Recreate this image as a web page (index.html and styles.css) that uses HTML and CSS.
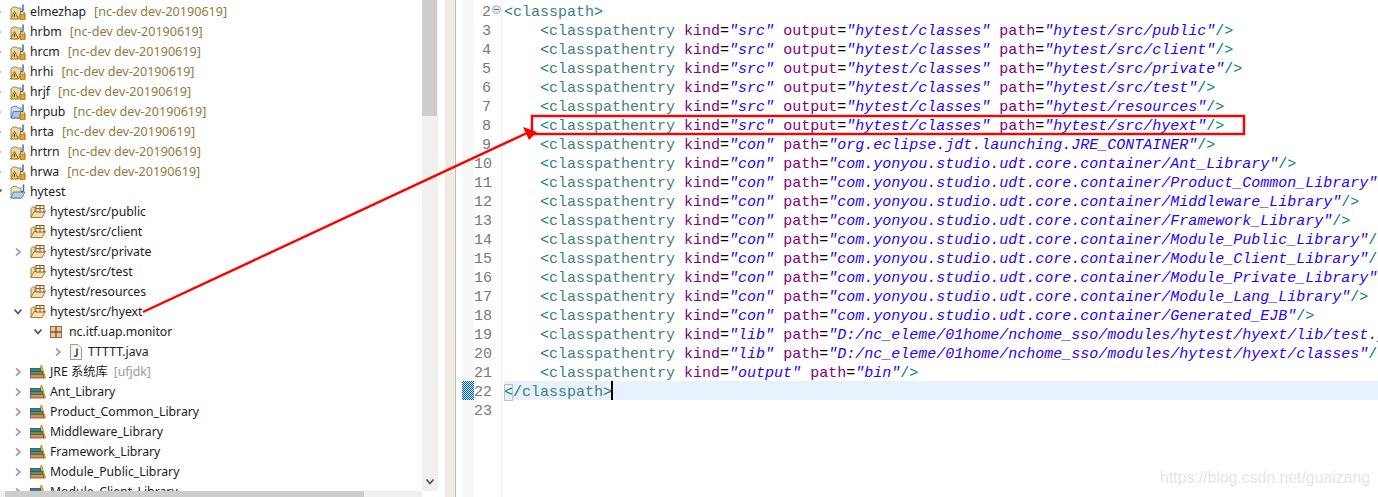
FILE: index.html
```html
<!DOCTYPE html>
<html lang="en">
<head>
<meta charset="utf-8">
<title>Package Explorer and .classpath</title>
<link rel="stylesheet" href="styles.css">
</head>
<body>
<svg class="defs" width="0" height="0" aria-hidden="true">
  <defs>
    <symbol id="ch-r" viewBox="0 0 8 10"><path d="M2 1.5 L6 5 L2 8.5" fill="none" stroke="#a3a3a3" stroke-width="1.8"/></symbol>
    <symbol id="ch-d" viewBox="0 0 10 8"><path d="M1.5 1.5 L5 5.5 L8.5 1.5" fill="none" stroke="#555" stroke-width="1.8"/></symbol>
    <symbol id="closed" viewBox="0 0 16 16">
      <path d="M1 5 L3 3 H6 L7 4 H11 V13 H1 Z" fill="#e9d9a8" stroke="#9a8a60"/>
      <path d="M13 .5 V6 Q13 8 10.5 7.5" fill="none" stroke="#3c6fb0" stroke-width="1.5"/>
      <path d="M4.5 7.5 L8.5 15 H.5 Z" fill="#f7d44a" stroke="#8a6a10"/>
      <path d="M5 10 H4 V13 H5 Z" fill="#333"/>
      <rect x="10" y="9" width="5" height="7" rx="1" fill="#f0a51e" stroke="#a86a10"/>
      <rect x="10.5" y="8" width="4" height="2" fill="#e8e0c8" stroke="#8a7a50" stroke-width=".6"/>
    </symbol>
    <symbol id="closedb" viewBox="0 0 16 16">
      <path d="M1 4 L3 2.5 H7 L8 4 H11 V14 H1 Z" fill="#cfe0f0" stroke="#6e88a6"/>
      <path d="M1 14 L3.5 7.5 H13 L10.5 14 Z" fill="#a9c8ea" stroke="#4f7fb0"/>
      <path d="M13 .5 V6 Q13 8 10.5 7.5" fill="none" stroke="#3c6fb0" stroke-width="1.5"/>
      <rect x="10" y="9" width="5" height="7" rx="1" fill="#f0a51e" stroke="#a86a10"/>
      <rect x="10.5" y="8" width="4" height="2" fill="#e8e0c8" stroke="#8a7a50" stroke-width=".6"/>
    </symbol>
    <symbol id="open" viewBox="0 0 16 16">
      <path d="M1 4 L3 2.5 H7 L8 4 H11 V14 H1 Z" fill="#f4e8c4" stroke="#a4905a"/>
      <path d="M1 14 L3.5 8 H15 L11.5 14 Z" fill="#b4d2f0" stroke="#4f7fb0"/>
      <path d="M13.5 .5 V6 Q13.5 8 11 7.5" fill="none" stroke="#3c6fb0" stroke-width="1.5"/>
    </symbol>
    <symbol id="src" viewBox="0 0 16 16">
      <path d="M1 4.5 L2.5 3 H5 V13.5 H1 Z" fill="#f3dba6" stroke="#a87a38"/>
      <path d="M1 13.5 L4 7.5 H15.5 L12 13.5 Z" fill="#f8dfa8" stroke="#a87a38"/>
      <rect x="6" y="1.5" width="8" height="6.5" fill="#fff2d6" stroke="#8a5a28"/>
      <path d="M6 4.5 H14 M10 1.5 V8" stroke="#8a5a28"/>
    </symbol>
    <symbol id="pkg" viewBox="0 0 12 12">
      <rect x=".5" y=".5" width="11" height="11" fill="#e6c8a4" stroke="#9a6a44"/>
      <path d="M0 6 H12 M6 0 V12" stroke="#8a5234" stroke-width="1.4"/>
    </symbol>
    <symbol id="jfile" viewBox="0 0 12 16">
      <path d="M.5 .5 H8 L11.5 4 V15.5 H.5 Z" fill="#fbf8ee" stroke="#a89a78"/>
      <path d="M7 4.5 V10.5 Q7 12.5 4 12" fill="none" stroke="#2c5fa8" stroke-width="1.8"/>
    </symbol>
    <symbol id="lib" viewBox="0 0 16 16">
      <path d="M11.5 1 L15.5 14 H13 L10 4 Z" fill="#f2c438" stroke="#a87a18" stroke-width=".8"/>
      <rect x=".5" y="4.5" width="10" height="3" fill="#3a7ca4" stroke="#24506e" stroke-width=".8"/>
      <rect x=".5" y="7.5" width="12" height="3" fill="#4a9a5c" stroke="#2a6038" stroke-width=".8"/>
      <rect x=".5" y="10.5" width="13" height="3.5" fill="#dc8a5a" stroke="#8a4a28" stroke-width=".8"/>
    </symbol>
  </defs>
</svg>

<div class="window">
  <aside class="explorer">
    <div class="tree">
      <div class="tree-inner">
        <div class="row"><span class="tw"><svg class="cr"><use href="#ch-r"/></svg></span><svg class="ico"><use href="#closed"/></svg><span class="name">elmezhap</span><span class="deco">[nc-dev dev-20190619]</span></div>
        <div class="row"><span class="tw"><svg class="cr"><use href="#ch-r"/></svg></span><svg class="ico"><use href="#closed"/></svg><span class="name">hrbm</span><span class="deco">[nc-dev dev-20190619]</span></div>
        <div class="row"><span class="tw"><svg class="cr"><use href="#ch-r"/></svg></span><svg class="ico"><use href="#closed"/></svg><span class="name">hrcm</span><span class="deco">[nc-dev dev-20190619]</span></div>
        <div class="row"><span class="tw"><svg class="cr"><use href="#ch-r"/></svg></span><svg class="ico"><use href="#closed"/></svg><span class="name">hrhi</span><span class="deco">[nc-dev dev-20190619]</span></div>
        <div class="row"><span class="tw"><svg class="cr"><use href="#ch-r"/></svg></span><svg class="ico"><use href="#closed"/></svg><span class="name">hrjf</span><span class="deco">[nc-dev dev-20190619]</span></div>
        <div class="row"><span class="tw"><svg class="cr"><use href="#ch-r"/></svg></span><svg class="ico"><use href="#closedb"/></svg><span class="name">hrpub</span><span class="deco">[nc-dev dev-20190619]</span></div>
        <div class="row"><span class="tw"><svg class="cr"><use href="#ch-r"/></svg></span><svg class="ico"><use href="#closed"/></svg><span class="name">hrta</span><span class="deco">[nc-dev dev-20190619]</span></div>
        <div class="row"><span class="tw"><svg class="cr"><use href="#ch-r"/></svg></span><svg class="ico"><use href="#closed"/></svg><span class="name">hrtrn</span><span class="deco">[nc-dev dev-20190619]</span></div>
        <div class="row"><span class="tw"><svg class="cr"><use href="#ch-r"/></svg></span><svg class="ico"><use href="#closed"/></svg><span class="name">hrwa</span><span class="deco">[nc-dev dev-20190619]</span></div>
        <div class="row"><span class="tw"><svg class="cd"><use href="#ch-d"/></svg></span><svg class="ico"><use href="#open"/></svg><span class="name">hytest</span></div>
        <div class="row d1"><span class="tw"></span><svg class="ico"><use href="#src"/></svg><span class="name">hytest/src/public</span></div>
        <div class="row d1"><span class="tw"></span><svg class="ico"><use href="#src"/></svg><span class="name">hytest/src/client</span></div>
        <div class="row d1"><span class="tw"><svg class="cr"><use href="#ch-r"/></svg></span><svg class="ico"><use href="#src"/></svg><span class="name">hytest/src/private</span></div>
        <div class="row d1"><span class="tw"></span><svg class="ico"><use href="#src"/></svg><span class="name">hytest/src/test</span></div>
        <div class="row d1"><span class="tw"></span><svg class="ico"><use href="#src"/></svg><span class="name">hytest/resources</span></div>
        <div class="row d1"><span class="tw"><svg class="cd"><use href="#ch-d"/></svg></span><svg class="ico"><use href="#src"/></svg><span class="name">hytest/src/hyext</span></div>
        <div class="row d2"><span class="tw"><svg class="cd"><use href="#ch-d"/></svg></span><svg class="ico-s"><use href="#pkg"/></svg><span class="name">nc.itf.uap.monitor</span></div>
        <div class="row d3"><span class="tw"><svg class="cr"><use href="#ch-r"/></svg></span><svg class="ico-s j"><use href="#jfile"/></svg><span class="name">TTTTT.java</span></div>
        <div class="row d1"><span class="tw"><svg class="cr"><use href="#ch-r"/></svg></span><svg class="ico"><use href="#lib"/></svg><span class="name">JRE 系统库</span><span class="deco tight">[ufjdk]</span></div>
        <div class="row d1"><span class="tw"><svg class="cr"><use href="#ch-r"/></svg></span><svg class="ico"><use href="#lib"/></svg><span class="name">Ant_Library</span></div>
        <div class="row d1"><span class="tw"><svg class="cr"><use href="#ch-r"/></svg></span><svg class="ico"><use href="#lib"/></svg><span class="name">Product_Common_Library</span></div>
        <div class="row d1"><span class="tw"><svg class="cr"><use href="#ch-r"/></svg></span><svg class="ico"><use href="#lib"/></svg><span class="name">Middleware_Library</span></div>
        <div class="row d1"><span class="tw"><svg class="cr"><use href="#ch-r"/></svg></span><svg class="ico"><use href="#lib"/></svg><span class="name">Framework_Library</span></div>
        <div class="row d1"><span class="tw"><svg class="cr"><use href="#ch-r"/></svg></span><svg class="ico"><use href="#lib"/></svg><span class="name">Module_Public_Library</span></div>
        <div class="row d1"><span class="tw"><svg class="cr"><use href="#ch-r"/></svg></span><svg class="ico"><use href="#lib"/></svg><span class="name">Module_Client_Library</span></div>
      </div>
    </div>
    <div class="vbar">
      <div class="vthumb"></div>
      <svg class="vdown"><use href="#ch-d"/></svg>
    </div>
    <div class="hbar"><div class="hthumb"></div></div>
  </aside>

  <div class="sash"></div>

  <main class="editor">
    <div class="ruler"><div class="ruler-mark"></div></div>
    <div class="gutter">
      <div class="num">2<span class="fold"></span></div>
      <div class="num">3</div><div class="num">4</div><div class="num">5</div><div class="num">6</div><div class="num">7</div>
      <div class="num">8</div><div class="num">9</div><div class="num">10</div><div class="num">11</div><div class="num">12</div>
      <div class="num">13</div><div class="num">14</div><div class="num">15</div><div class="num">16</div><div class="num">17</div>
      <div class="num">18</div><div class="num">19</div><div class="num">20</div><div class="num">21</div><div class="num">22</div><div class="num">23</div>
    </div>
    <div class="code">
      <div class="line"><b>&lt;</b><i>classpath</i><b>&gt;</b></div>
      <div class="line in"><b>&lt;</b><i>classpathentry</i> <u>kind</u>=<em>"src"</em> <u>output</u>=<em>"hytest/classes"</em> <u>path</u>=<em>"hytest/src/public"</em><b>/&gt;</b></div>
      <div class="line in"><b>&lt;</b><i>classpathentry</i> <u>kind</u>=<em>"src"</em> <u>output</u>=<em>"hytest/classes"</em> <u>path</u>=<em>"hytest/src/client"</em><b>/&gt;</b></div>
      <div class="line in"><b>&lt;</b><i>classpathentry</i> <u>kind</u>=<em>"src"</em> <u>output</u>=<em>"hytest/classes"</em> <u>path</u>=<em>"hytest/src/private"</em><b>/&gt;</b></div>
      <div class="line in"><b>&lt;</b><i>classpathentry</i> <u>kind</u>=<em>"src"</em> <u>output</u>=<em>"hytest/classes"</em> <u>path</u>=<em>"hytest/src/test"</em><b>/&gt;</b></div>
      <div class="line in"><b>&lt;</b><i>classpathentry</i> <u>kind</u>=<em>"src"</em> <u>output</u>=<em>"hytest/classes"</em> <u>path</u>=<em>"hytest/resources"</em><b>/&gt;</b></div>
      <div class="line in"><b>&lt;</b><i>classpathentry</i> <u>kind</u>=<em>"src"</em> <u>output</u>=<em>"hytest/classes"</em> <u>path</u>=<em>"hytest/src/hyext"</em><b>/&gt;</b></div>
      <div class="line in"><b>&lt;</b><i>classpathentry</i> <u>kind</u>=<em>"con"</em> <u>path</u>=<em>"org.eclipse.jdt.launching.JRE_CONTAINER"</em><b>/&gt;</b></div>
      <div class="line in"><b>&lt;</b><i>classpathentry</i> <u>kind</u>=<em>"con"</em> <u>path</u>=<em>"com.yonyou.studio.udt.core.container/Ant_Library"</em><b>/&gt;</b></div>
      <div class="line in"><b>&lt;</b><i>classpathentry</i> <u>kind</u>=<em>"con"</em> <u>path</u>=<em>"com.yonyou.studio.udt.core.container/Product_Common_Library"</em><b>/&gt;</b></div>
      <div class="line in"><b>&lt;</b><i>classpathentry</i> <u>kind</u>=<em>"con"</em> <u>path</u>=<em>"com.yonyou.studio.udt.core.container/Middleware_Library"</em><b>/&gt;</b></div>
      <div class="line in"><b>&lt;</b><i>classpathentry</i> <u>kind</u>=<em>"con"</em> <u>path</u>=<em>"com.yonyou.studio.udt.core.container/Framework_Library"</em><b>/&gt;</b></div>
      <div class="line in"><b>&lt;</b><i>classpathentry</i> <u>kind</u>=<em>"con"</em> <u>path</u>=<em>"com.yonyou.studio.udt.core.container/Module_Public_Library"</em><b>/&gt;</b></div>
      <div class="line in"><b>&lt;</b><i>classpathentry</i> <u>kind</u>=<em>"con"</em> <u>path</u>=<em>"com.yonyou.studio.udt.core.container/Module_Client_Library"</em><b>/&gt;</b></div>
      <div class="line in"><b>&lt;</b><i>classpathentry</i> <u>kind</u>=<em>"con"</em> <u>path</u>=<em>"com.yonyou.studio.udt.core.container/Module_Private_Library"</em><b>/&gt;</b></div>
      <div class="line in"><b>&lt;</b><i>classpathentry</i> <u>kind</u>=<em>"con"</em> <u>path</u>=<em>"com.yonyou.studio.udt.core.container/Module_Lang_Library"</em><b>/&gt;</b></div>
      <div class="line in"><b>&lt;</b><i>classpathentry</i> <u>kind</u>=<em>"con"</em> <u>path</u>=<em>"com.yonyou.studio.udt.core.container/Generated_EJB"</em><b>/&gt;</b></div>
      <div class="line in"><b>&lt;</b><i>classpathentry</i> <u>kind</u>=<em>"lib"</em> <u>path</u>=<em>"D:/nc_eleme/01home/nchome_sso/modules/hytest/hyext/lib/test.jar"</em><b>/&gt;</b></div>
      <div class="line in"><b>&lt;</b><i>classpathentry</i> <u>kind</u>=<em>"lib"</em> <u>path</u>=<em>"D:/nc_eleme/01home/nchome_sso/modules/hytest/hyext/classes"</em><b>/&gt;</b></div>
      <div class="line in"><b>&lt;</b><i>classpathentry</i> <u>kind</u>=<em>"output"</em> <u>path</u>=<em>"bin"</em><b>/&gt;</b></div>
      <div class="line current"><b class="match">&lt;</b><b>/</b><i>classpath</i><b>&gt;</b><span class="caret"></span></div>
      <div class="line"></div>
    </div>
  </main>
</div>

<svg class="annot" width="1378" height="497" aria-hidden="true">
  <rect x="532" y="116" width="712" height="18" fill="none" stroke="#f00" stroke-width="2.4"/>
  <line x1="143" y1="312" x2="527" y2="133" stroke="#f00" stroke-width="2.4"/>
  <polygon points="523,127 537,132 529,140" fill="#f00"/>
</svg>
<div class="watermark">https://blog.csdn.net/guaizang</div>
</body>
</html>
```

FILE: styles.css
```css
* { box-sizing: border-box; }
html, body { margin: 0; padding: 0; height: 100%; background: #fff; overflow: hidden; }
body { position: relative; }
.defs { position: absolute; }

.window { display: flex; width: 1378px; height: 497px; }

/* left tree */
.explorer {
  width: 445px;
  flex: none;
  display: grid;
  grid-template-columns: 422px 16px 7px;
  grid-template-rows: 491px 6px;
}
.tree { overflow: hidden; grid-column: 1; grid-row: 1; }
.tree-inner {
  margin-left: -10px;
  padding-top: 2px;
  font: 12.25px/20px "Noto Sans", "Noto Sans CJK SC", sans-serif;
  color: #1c1c1c;
  white-space: nowrap;
}
.row { display: flex; align-items: center; height: 20px; }
.d1 { padding-left: 20px; }
.d2 { padding-left: 40px; }
.d3 { padding-left: 60px; }
.tw { width: 20px; flex: none; display: flex; justify-content: flex-start; align-items: center; padding-left: 4px; }
.cr { width: 8px; height: 10px; }
.cd { width: 10px; height: 8px; margin-left: -1px; }
.ico { width: 16px; height: 16px; flex: none; margin-right: 4px; }
.ico-s { width: 12px; height: 12px; flex: none; margin-right: 7px; }
.ico-s.j { width: 12px; height: 16px; margin-right: 6px; }
.name { display: block; }
.deco { color: #957a3c; margin-left: 8px; font-size: 12.6px; }
.deco.tight { margin-left: 6px; color: #9a9a9a; font-size: 12.25px; }

.vbar { grid-column: 2; grid-row: 1; background: #f0f0f0; display: flex; flex-direction: column; justify-content: space-between; align-items: center; padding-bottom: 5px; }
.vthumb { width: 15px; height: 116px; background: #cdcdcd; align-self: flex-start; }
.vdown { width: 10px; height: 8px; }
.hbar { grid-column: 1; grid-row: 2; background: #f0f0f0; padding-left: 5px; }
.hthumb { width: 359px; height: 6px; background: #cdcdcd; }

/* sash between tree and editor */
.sash { width: 11px; flex: none; background: #efebdf; border-right: 1px solid #b9c1d0; }

/* editor */
.editor { flex: 1; min-width: 0; display: flex; padding-left: 6px; overflow: hidden; font: 15px/23px "Liberation Mono", monospace; }
.ruler { width: 12px; flex: none; background: #f8f8f8; padding-top: 381px; }
.ruler-mark {
  height: 19px;
  background: repeating-conic-gradient(#0060c0 0 25%, #cfe0f0 0 50%) 0 0 / 2px 2px;
}
.gutter { width: 28px; flex: none; padding-top: 1px; border-right: 1px solid #f0f0f0; color: #787878; }
.num { height: 19px; text-align: right; padding-right: 10px; position: relative; }
.fold {
  position: absolute; right: 0; top: 4px;
  width: 9px; height: 9px; border-radius: 50%;
  background: #dfe6ee; border: 1px solid #a8b6c8;
}
.fold::after { content: ""; position: absolute; left: 1px; right: 1px; top: 3px; height: 1px; background: #5f7388; }

.code { flex: 1; min-width: 0; padding-top: 1px; overflow: hidden; color: #000; }
.line { height: 19px; padding-left: 2px; position: relative; white-space: pre; }
.line.in { padding-left: 38px; }
.line.current { background: linear-gradient(#e8f2fe, #e8f2fe) 2px 0 no-repeat; }
.line b { font-weight: normal; color: #008080; }
.line i { font-style: normal; color: #3f7f7f; }
.line u { text-decoration: none; color: #7f007f; }
.line em { font-style: italic; color: #2a00ff; }
.match { outline: 1px solid #c0c0c0; outline-offset: -1px; }
.caret { display: inline-block; width: 2px; height: 19px; background: #000; vertical-align: top; margin-left: -1px; }

/* overlays */
.annot { position: absolute; left: 0; top: 0; pointer-events: none; }
.watermark {
  position: absolute; right: 8px; bottom: 10px;
  font: 15.8px/18px "Liberation Sans", sans-serif;
  color: #e6e6e6;
}
```
